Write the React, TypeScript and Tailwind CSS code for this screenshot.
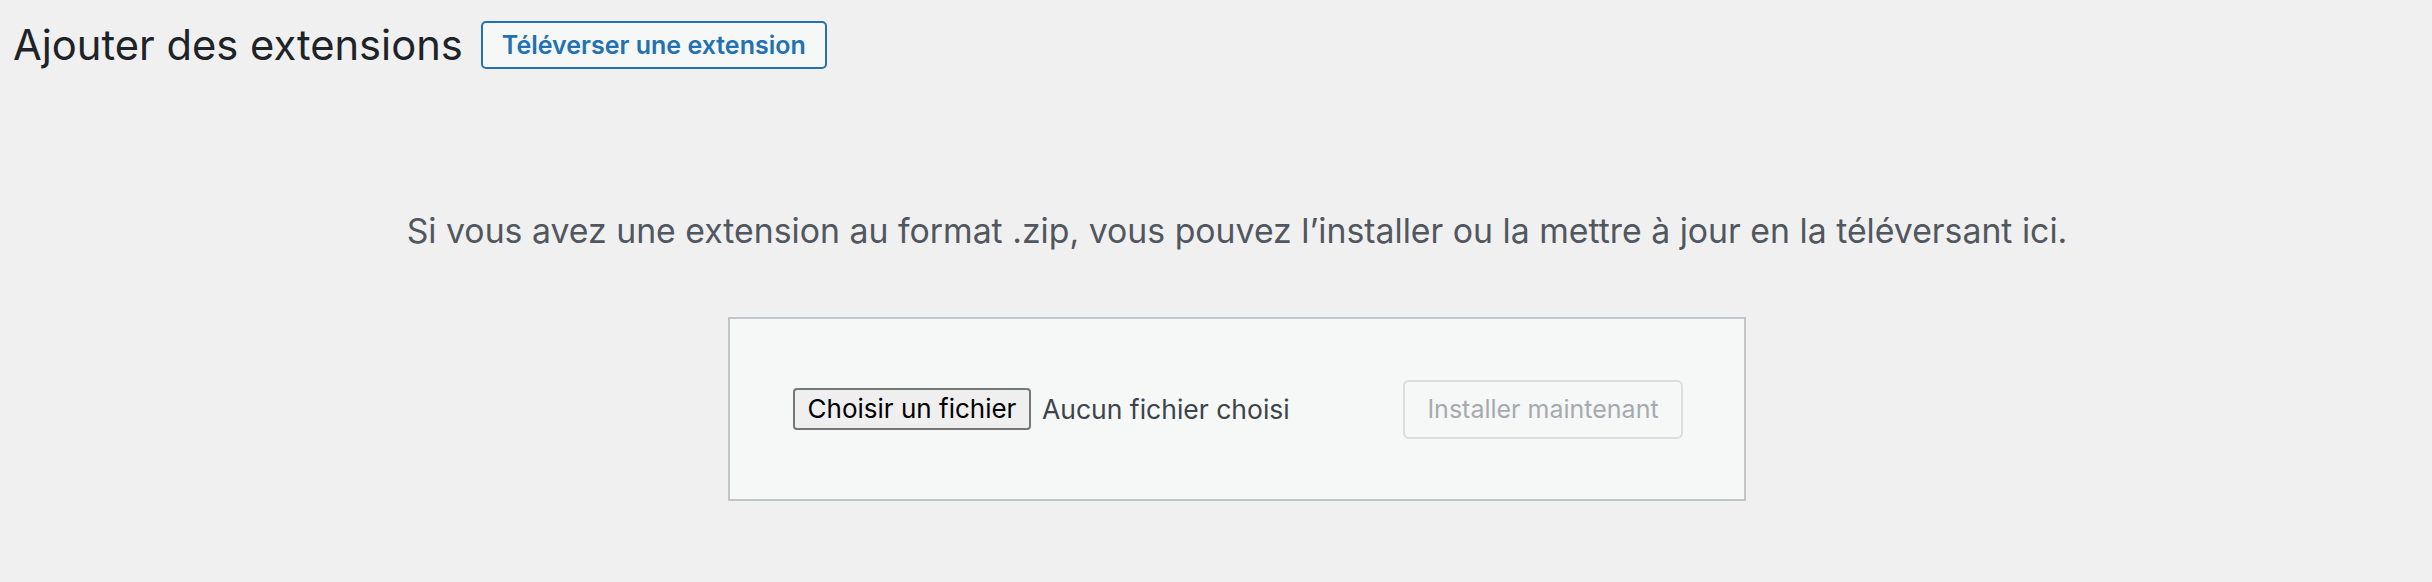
export default function App() {
  return (
    <div
      className="w-full h-[582px] bg-[#f0f0f1] overflow-hidden"
      style={{ fontFamily: 'Inter, "Noto Sans", "Liberation Sans", sans-serif' }}
    >
      {/* en-tête */}
      <div className="flex items-center gap-[18px] pl-[13px] pt-[21px]">
        <h1 className="text-[41.7px] leading-[48px] font-normal text-[#1d2327]">Ajouter des extensions</h1>
        <button className="h-[48px] px-[19px] border-2 border-[#2271b1] rounded-[5px] bg-[#f6f7f7] text-[#2271b1] text-[25px] font-semibold leading-none">
          Téléverser une extension
        </button>
      </div>

      {/* zone de téléversement */}
      <div className="pl-[42px]">
        <p className="mt-[138px] text-center text-[33.8px] leading-[48px] text-[#50575e]">
          Si vous avez une extension au format .zip, vous pouvez l’installer ou la mettre à jour en la téléversant ici.
        </p>
        <div className="mx-auto mt-[62px] w-[1018px] h-[184px] border-2 border-[#c3c4c7] bg-[#f6f7f7] flex items-center justify-between pl-[63px] pr-[61px]">
          <div className="flex items-center gap-[11px]">
            <button className="h-[42px] w-[238px] border-2 border-[#767676] rounded-[4px] bg-[#efefef] text-black text-[26px] leading-none">
              Choisir un fichier
            </button>
            <span className="text-[26.5px] text-[#3c434a] leading-none">Aucun fichier choisi</span>
          </div>
          <button className="h-[59px] w-[280px] border-2 border-[#dcdcde] rounded-[6px] bg-[#f6f7f7] text-[#a7aaad] text-[25px] leading-none">
            Installer maintenant
          </button>
        </div>
      </div>
    </div>
  )
}
